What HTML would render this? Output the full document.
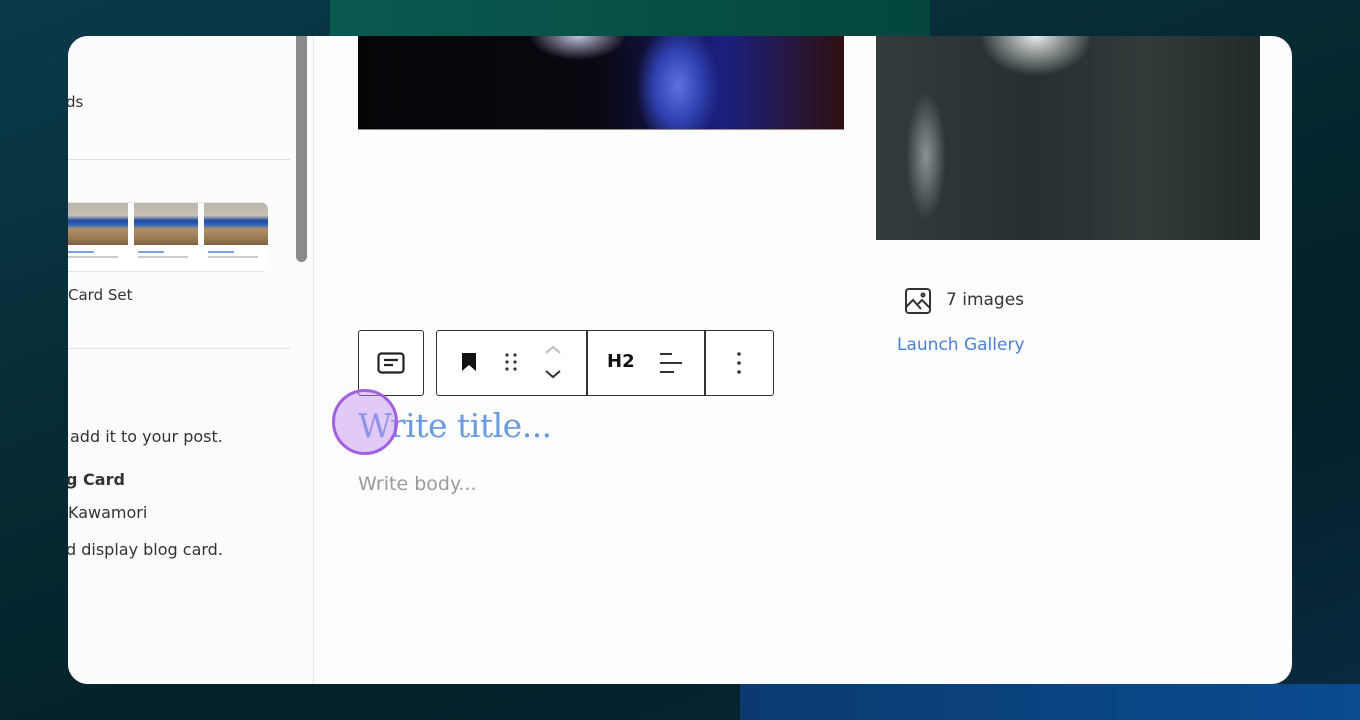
<!DOCTYPE html>
<html><head><meta charset="utf-8"><style>
*{margin:0;padding:0;box-sizing:border-box}
body{width:1360px;height:720px;overflow:hidden;position:relative;font-family:"DejaVu Sans",sans-serif;
background:linear-gradient(160deg,#0a3a4a 0%,#062a33 40%,#04202a 70%,#0a2a40 100%)}
.bgtop{position:absolute;left:330px;top:0;width:600px;height:40px;background:linear-gradient(90deg,#0a5a50,#04463c)}
.bgbot{position:absolute;left:740px;top:684px;width:620px;height:36px;background:linear-gradient(90deg,#0a3a70,#0a4c90)}
.card{position:absolute;left:68px;top:36px;width:1224px;height:648px;background:#fdfdfd;border-radius:20px;overflow:hidden}
.side{position:absolute;left:0;top:0;width:246px;height:648px;background:#fcfcfc;border-right:1px solid #e4e4e4}
.sb{position:absolute;left:228px;top:-10px;width:11px;height:236px;background:#8a8a8a;border-radius:6px}
.t{position:absolute;color:#333;font-size:16px;white-space:nowrap}
.hr{position:absolute;left:0;width:222px;height:1px;background:#e0e0e0}
.th{position:absolute;top:167px;width:64px;height:68px;background:#fff;}
.th i{display:block;height:42px;background:linear-gradient(180deg,#b8b4ac 0%,#c8c0b4 30%,#1c4aa0 42%,#3468b8 52%,#b09068 62%,#9a7850 85%,#7a6040 100%)}
.th b{display:block;margin:6px 4px 0;height:2px;width:26px;background:#7aa0e8}
.th u{display:block;margin:3px 4px 0;height:2px;width:50px;background:#ccc}
.mic{position:absolute;left:290px;top:0;width:486px;height:94px;background:radial-gradient(ellipse 60px 90px at 320px 50px,#6070e0 0%,#3040b0 40%,transparent 70%),radial-gradient(ellipse 60px 30px at 220px 0px,#c0c0e0,transparent 80%),linear-gradient(90deg,#050508 0%,#0a0810 50%,#1a2080 75%,#301010 100%);border-bottom:1px solid #9a8a80}
.mtn{position:absolute;left:808px;top:0;width:384px;height:204px;background:radial-gradient(ellipse 70px 50px at 160px 0px,#e8ecec,transparent 80%),radial-gradient(ellipse 25px 80px at 50px 120px,#8a9494,transparent 80%),linear-gradient(90deg,#323c3c,#263030 40%,#323a3a 70%,#222a2a)}
.btn{position:absolute;top:294px;height:66px;border:1.5px solid #333;border-radius:3px;background:#fff}
.dv{position:absolute;top:294px;width:1.5px;height:66px;background:#333}
</style></head><body>
<div class="bgtop"></div><div class="bgbot"></div>
<div class="card">
 <div class="side">
  <div class="t" style="left:-2px;top:57px;font-size:15px">ds</div>
  <div class="hr" style="top:123px"></div>
  <div style="position:absolute;left:-10px;top:166px;width:210px;height:70px;border:1px solid #e4e4e4;border-radius:6px;background:#fff"></div>
  <div class="th" style="left:-4px"><i></i><b></b><u></u></div>
  <div class="th" style="left:66px"><i></i><b></b><u></u></div>
  <div class="th" style="left:136px"><i style="border-radius:0 6px 0 0"></i><b></b><u></u></div>
  <div class="t" style="left:0;top:250px;font-size:15px">Card Set</div>
  <div class="hr" style="top:312px"></div>
  <div class="t" style="left:2px;top:391px">add it to your post.</div>
  <div class="t" style="left:-2px;top:434px;font-weight:bold">g Card</div>
  <div class="t" style="left:0;top:467px">Kawamori</div>
  <div class="t" style="left:-2px;top:504px">d display blog card.</div>
  <div class="sb"></div>
 </div>
 <div class="mic"></div>
 <div class="mtn"></div>
 <svg style="position:absolute;left:836px;top:251px" width="28" height="28" viewBox="0 0 28 28" fill="none" stroke="#333" stroke-width="2"><rect x="2" y="2" width="24" height="24" rx="3"/><path d="M2 20l7-7 8 9M14 17l4-4 8 8"/><circle cx="19" cy="8" r="1.5"/></svg>
 <div class="t" style="left:878px;top:254px;font-size:17px">7 images</div>
 <div class="t" style="left:829px;top:299px;font-size:17px;color:#4a80d8">Launch Gallery</div>
 <div class="btn" style="left:290px;width:66px"></div>
 <svg style="position:absolute;left:309px;top:316px" width="28" height="22" viewBox="0 0 28 22" fill="none" stroke="#222" stroke-width="2.2"><rect x="1.5" y="1.5" width="25" height="19" rx="3"/><path d="M7 8h14M7 13h9"/></svg>
 <div class="btn" style="left:368px;width:338px"></div>
 <div class="dv" style="left:518px"></div><div class="dv" style="left:636px"></div>
 <svg style="position:absolute;left:392px;top:316px" width="20" height="20" viewBox="0 0 20 20"><path d="M2 1h14v18l-7-6-7 6z" fill="#111"/></svg>
 <svg style="position:absolute;left:436px;top:316px" width="14" height="20" viewBox="0 0 14 20" fill="#333"><circle cx="3" cy="3" r="1.6"/><circle cx="11" cy="3" r="1.6"/><circle cx="3" cy="10" r="1.6"/><circle cx="11" cy="10" r="1.6"/><circle cx="3" cy="17" r="1.6"/><circle cx="11" cy="17" r="1.6"/></svg>
 <svg style="position:absolute;left:475px;top:308px" width="20" height="36" viewBox="0 0 20 36" fill="none" stroke-width="2"><path d="M3 9l7-6 7 6" stroke="#bbb"/><path d="M3 27l7 6 7-6" stroke="#333"/></svg>
 <div class="t" style="left:539px;top:315px;font-size:18px;font-weight:bold;color:#111">H2</div>
 <svg style="position:absolute;left:590px;top:316px" width="26" height="22" viewBox="0 0 26 22" stroke="#333" stroke-width="2"><path d="M2 2h12M2 11h22M2 20h14"/></svg>
 <svg style="position:absolute;left:666px;top:315px" width="10" height="24" viewBox="0 0 10 24" fill="#333"><circle cx="5" cy="3" r="1.8"/><circle cx="5" cy="12" r="1.8"/><circle cx="5" cy="21" r="1.8"/></svg>
 <div class="t" style="left:290px;top:370px;font-size:33px;font-family:'DejaVu Serif','Liberation Serif',serif;color:#6a9ae0;letter-spacing:-0.5px">Write title...</div>
 <div class="t" style="left:290px;top:437px;color:#9a9a9a;font-size:19px">Write body...</div>
 <div style="position:absolute;left:264px;top:353px;width:66px;height:66px;border-radius:50%;background:rgba(190,140,240,0.45);border:3px solid #a060e0"></div>
</div>
</body></html>
